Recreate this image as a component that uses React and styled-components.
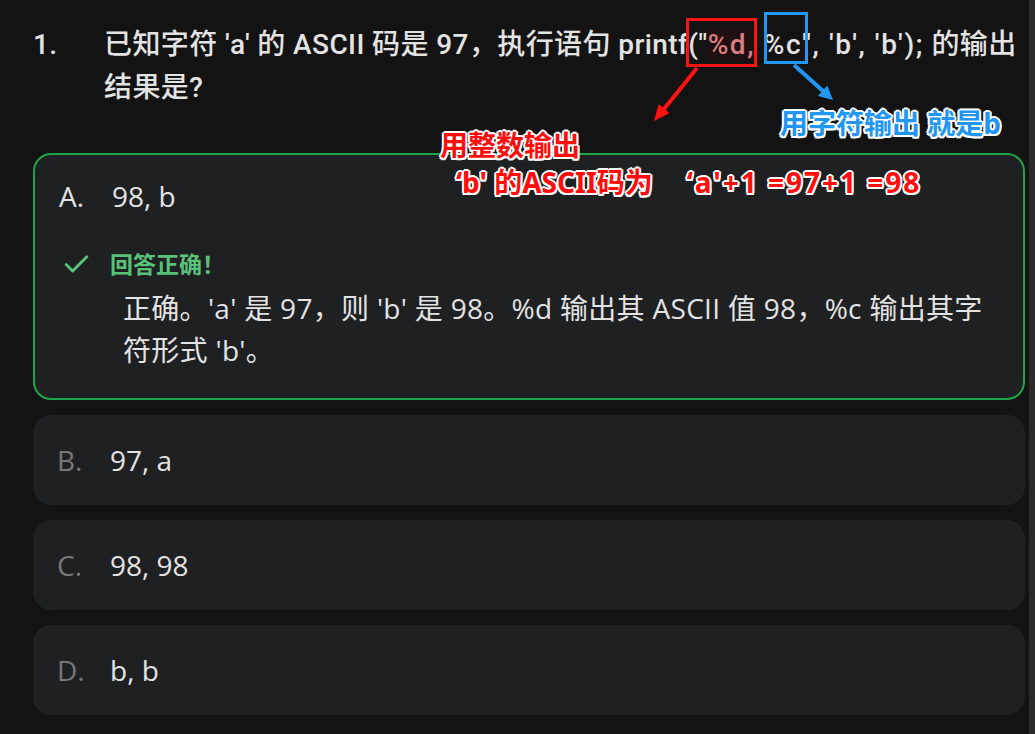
import React from 'react';
import styled, { createGlobalStyle } from 'styled-components';
import { Check } from 'lucide-react';

const GlobalStyle = createGlobalStyle`
  html, body {
    margin: 0;
    padding: 0;
    background: #131313;
  }
  body {
    font-family: "Open Sans", "Noto Sans CJK SC", sans-serif;
    color: #e3e3e3;
  }
`;

const Page = styled.div`
  position: relative;
  display: flex;
  width: 1035px;
  height: 734px;
  overflow: hidden;
  background: #131313;
`;

const Main = styled.div`
  flex: 1;
  padding: 23px 4px 0 33px;
`;

const ScrollTrack = styled.div`
  width: 6px;
  background: #2b2b2b;
`;

const Question = styled.div`
  display: flex;
  margin-right: -4px;
  font-family: Roboto, "Noto Sans CJK SC", sans-serif;
  font-size: 28px;
  line-height: 43px;
  font-weight: 500;
  letter-spacing: 0.4px;
`;

const QNum = styled.div`
  width: 71px;
  flex-shrink: 0;
`;

const QText = styled.div`
  flex: 1;
`;

const QLine = styled.div`
  white-space: nowrap;
`;

const Args = styled.span`
  letter-spacing: 1.6px;
`;

const Mark = styled.span`
  color: #dc7c7e;
  background: #1e1010;
`;

const Options = styled.div`
  display: flex;
  flex-direction: column;
  gap: 15px;
  margin-top: 44px;
`;

const Option = styled.div`
  background: #1f2022;
  border-radius: 18px;
  border: ${p => (p.$correct ? '2px solid #21a247' : 'none')};
  padding: ${p => (p.$correct ? '23px 24px 27px' : '27px 24px')};
`;

const Row = styled.div`
  display: flex;
  font-size: 28px;
  line-height: 36px;
`;

const Letter = styled.span`
  width: 53px;
  flex-shrink: 0;
  color: ${p => (p.$correct ? '#e3e3e3' : '#76777a')};
`;

const Feedback = styled.div`
  display: flex;
  align-items: center;
  margin-top: 32px;
  color: #58c278;
  font-size: 23px;
  line-height: 36px;
  font-weight: 700;

  svg {
    margin: 0 18px 0 2px;
  }
`;

const Explain = styled.div`
  padding: 5px 16px 0 64px;
  font-size: 28px;
  line-height: 42px;
  letter-spacing: 0.3px;
`;

const Note = styled.div`
  position: absolute;
  font-family: "Noto Sans", "Noto Sans CJK SC", sans-serif;
  font-weight: 700;
  line-height: 1;
  white-space: pre;
  text-shadow: -2px 0 #fff, 2px 0 #fff, 0 -2px #fff, 0 2px #fff,
    -1.5px -1.5px #fff, 1.5px -1.5px #fff, -1.5px 1.5px #fff, 1.5px 1.5px #fff;
`;

const IntNote = styled(Note)`
  left: 440px;
  top: 131px;
  font-size: 28px;
  color: #ff0d0d;
`;

const AsciiNote = styled(Note)`
  left: 456px;
  top: 168px;
  font-size: 28px;
  color: #ff0d0d;
`;

const Formula = styled.span`
  margin-left: 12px;
  letter-spacing: 2px;
`;

const CharNote = styled(Note)`
  left: 780px;
  top: 109px;
  font-size: 28px;
  color: #2196f3;
`;

const RedBox = styled.div`
  position: absolute;
  left: 686px;
  top: 18px;
  width: 65px;
  height: 43px;
  border: 3px solid #ff1212;
`;

const BlueBox = styled.div`
  position: absolute;
  left: 764px;
  top: 12px;
  width: 38px;
  height: 46px;
  border: 3px solid #2196f3;
`;

const Arrows = styled.svg`
  position: absolute;
  left: 0;
  top: 0;
  pointer-events: none;
`;

const options = [
  { letter: 'B.', text: '97, a' },
  { letter: 'C.', text: '98, 98' },
  { letter: 'D.', text: 'b, b' },
];

export default function App() {
  return (
    <Page>
      <GlobalStyle />
      <Main>
        <Question>
          <QNum>1.</QNum>
          <QText>
            <QLine>
              已知字符 'a' 的 ASCII 码是 97，执行语句 printf("<Args><Mark>%d,</Mark> %c", 'b', 'b');</Args> 的输出
            </QLine>
            <QLine>结果是?</QLine>
          </QText>
        </Question>
        <Options>
          <Option $correct>
            <Row>
              <Letter $correct>A.</Letter>
              <span>98, b</span>
            </Row>
            <Feedback>
              <Check size={31} strokeWidth={2.3} />
              回答正确！
            </Feedback>
            <Explain>
              正确。'a' 是 97，则 'b' 是 98。%d 输出其 ASCII 值 98，%c 输出其字符形式 'b'。
            </Explain>
          </Option>
          {options.map(o => (
            <Option key={o.letter}>
              <Row>
                <Letter>{o.letter}</Letter>
                <span>{o.text}</span>
              </Row>
            </Option>
          ))}
        </Options>
      </Main>
      <ScrollTrack />

      <RedBox />
      <BlueBox />
      <Arrows width="1035" height="734" viewBox="0 0 1035 734">
        <line x1="697" y1="68" x2="664" y2="109" stroke="#ff1212" strokeWidth="4" />
        <polygon points="654,121 669.5,113 658.7,104.2" fill="#ff1212" />
        <line x1="794" y1="65" x2="823" y2="91" stroke="#2196f3" strokeWidth="4" />
        <polygon points="833,100 817.9,95.9 827.3,85.4" fill="#2196f3" />
      </Arrows>
      <CharNote>用字符输出 就是b</CharNote>
      <IntNote>用整数输出</IntNote>
      <AsciiNote>
        ‘b' 的ASCII码为   <Formula>‘a'+1 =97+1 =98</Formula>
      </AsciiNote>
    </Page>
  );
}
